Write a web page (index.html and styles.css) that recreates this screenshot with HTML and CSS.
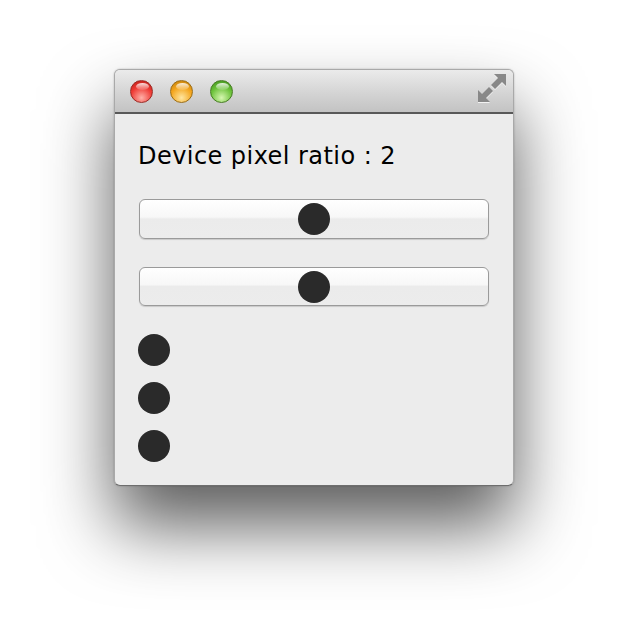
FILE: index.html
```html
<!DOCTYPE html>
<html lang="en">
  <head>
    <meta charset="UTF-8" />
    <meta name="viewport" content="width=device-width, initial-scale=1.0" />
    <title>Device pixel ratio</title>
    <link rel="stylesheet" href="styles.css">
  </head>
  <body>
    <div class="window">
      <div class="titlebar">
        <div class="lights">
          <span class="light red"></span>
          <span class="light yellow"></span>
          <span class="light green"></span>
        </div>
        <svg class="fullscreen" width="30" height="30" viewBox="0 0 30 30">
          <g fill="#f2f2f2" transform="translate(0 1)">
            <polygon points="29,1 29,13 25,9 18,16 14,12 21,5 17,1" />
            <polygon points="1,29 1,17 5,21 12,14 16,18 9,25 13,29" />
          </g>
          <g fill="#888">
            <polygon points="29,1 29,13 25,9 18,16 14,12 21,5 17,1" />
            <polygon points="1,29 1,17 5,21 12,14 16,18 9,25 13,29" />
          </g>
        </svg>
      </div>
      <div class="content">
        <p class="ratio">Device pixel ratio : 2</p>
        <div class="slider"><span class="knob"></span></div>
        <div class="slider"><span class="knob"></span></div>
        <div class="dots">
          <span class="dot"></span>
          <span class="dot"></span>
          <span class="dot"></span>
        </div>
      </div>
    </div>
  </body>
</html>
```

FILE: styles.css
```css
* {
  box-sizing: border-box;
  margin: 0;
  padding: 0;
}

html,
body {
  min-height: 100%;
}

body {
  background: #fff;
  font-family: "DejaVu Sans", "Liberation Sans", sans-serif;
  padding-top: 69px;
  min-height: 644px;
}

.window {
  width: 400px;
  margin: 0 auto;
  border-radius: 6px;
  overflow: hidden;
  background: #ececec;
  border: 1px solid #a9a9a9;
  border-bottom-color: #6e6e6e;
  box-shadow: 0 40px 70px rgba(0, 0, 0, 0.64), 0 0 2px rgba(0, 0, 0, 0.25);
}

.titlebar {
  height: 44px;
  display: flex;
  align-items: center;
  justify-content: space-between;
  padding: 0 6px 0 15px;
  background: linear-gradient(#ebebeb, #d2d2d2 60%, #c3c3c3);
  border-bottom: 2px solid #585858;
}

.lights {
  display: flex;
  gap: 17px;
}

.light {
  width: 23px;
  height: 23px;
  border-radius: 50%;
  position: relative;
}

.light::after {
  content: "";
  position: absolute;
  left: 5px;
  top: 2px;
  width: 13px;
  height: 7px;
  border-radius: 50%;
  background: linear-gradient(rgba(255, 255, 255, 0.85), rgba(255, 255, 255, 0.1));
}

.red {
  background: radial-gradient(circle at 50% 80%, #ffb0a8, #ef3b35 55%, #b81a14);
  border: 1px solid #9a2a25;
}

.yellow {
  background: radial-gradient(circle at 50% 80%, #ffe6a0, #f4a51c 55%, #bb7a08);
  border: 1px solid #9b6d16;
}

.green {
  background: radial-gradient(circle at 50% 80%, #d6f7b0, #6cc23a 55%, #3b8c1a);
  border: 1px solid #467c22;
}

.fullscreen {
  display: block;
  margin-top: -6px;
}

.content {
  padding: 24px 23px 23px;
  display: flex;
  flex-direction: column;
}

.ratio {
  font-size: 24px;
  letter-spacing: 0.45px;
  line-height: 36px;
  color: #000;
  margin-bottom: 25px;
}

.slider {
  width: 350px;
  height: 40px;
  margin-left: 1px;
  margin-bottom: 28px;
  border: 1px solid #9a9a9a;
  border-radius: 6px;
  background: linear-gradient(#ffffff, #f7f7f7 45%, #ebebeb 50%, #ececec);
  box-shadow: 0 1px 1px rgba(0, 0, 0, 0.15);
  display: flex;
  align-items: center;
  justify-content: center;
}

.slider + .slider {
  height: 39px;
  margin-bottom: 28px;
}

.knob,
.dot {
  display: block;
  width: 32px;
  height: 32px;
  border-radius: 50%;
  background: #2a2a2a;
}

.dots {
  display: flex;
  flex-direction: column;
  gap: 16px;
}
```
